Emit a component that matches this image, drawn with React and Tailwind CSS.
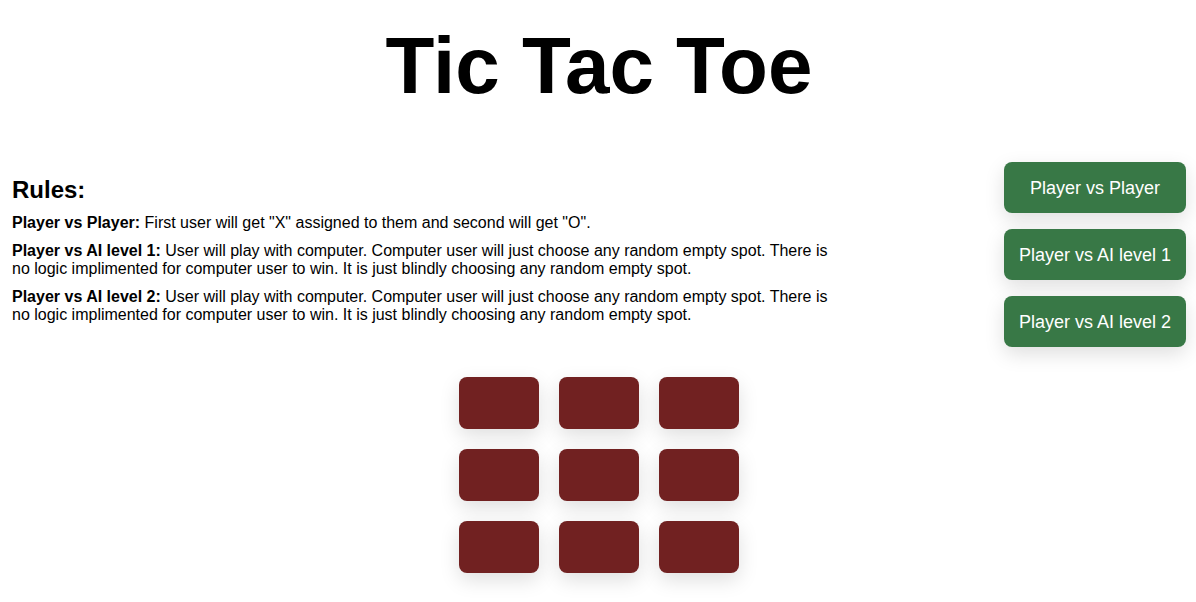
const rules = [
  {
    mode: 'Player vs Player:',
    text: 'First user will get "X" assigned to them and second will get "O".',
  },
  {
    mode: 'Player vs AI level 1:',
    text: 'User will play with computer. Computer user will just choose any random empty spot. There is no logic implimented for computer user to win. It is just blindly choosing any random empty spot.',
  },
  {
    mode: 'Player vs AI level 2:',
    text: 'User will play with computer. Computer user will just choose any random empty spot. There is no logic implimented for computer user to win. It is just blindly choosing any random empty spot.',
  },
];

const modes = ['Player vs Player', 'Player vs AI level 1', 'Player vs AI level 2'];

export default function App() {
  return (
    <div className="min-h-screen bg-white pb-7 pl-[2px] font-['Liberation_Sans',Arial,sans-serif] text-black">
      <h1 className="pt-5 text-center text-[80px] leading-[92px] font-bold">Tic Tac Toe</h1>

      <div className="mt-[50px] flex items-start justify-between px-[10px]">
        <section className="w-[70%] pt-[14px]">
          <h2 className="text-2xl leading-7 font-bold">Rules:</h2>
          {rules.map((rule) => (
            <p key={rule.mode} className="mt-[10px] text-base leading-[18px]">
              <b>{rule.mode}</b> {rule.text}
            </p>
          ))}
        </section>

        <nav className="flex flex-col gap-4" aria-label="Game mode">
          {modes.map((mode) => (
            <button
              key={mode}
              type="button"
              className="h-[51px] rounded-lg bg-[#387846] px-[15px] text-lg text-white shadow-[0_7px_20px_rgba(0,0,0,0.13)]"
            >
              {mode}
            </button>
          ))}
        </nav>
      </div>

      <main className="mx-auto mt-[30px] grid w-fit grid-cols-3 gap-5">
        {Array.from({ length: 9 }, (_, i) => (
          <button
            key={i}
            type="button"
            aria-label={`Cell ${i + 1}`}
            className="h-[52px] w-20 rounded-lg bg-[#712121] shadow-[0_7px_20px_rgba(0,0,0,0.13)]"
          />
        ))}
      </main>
    </div>
  );
}
